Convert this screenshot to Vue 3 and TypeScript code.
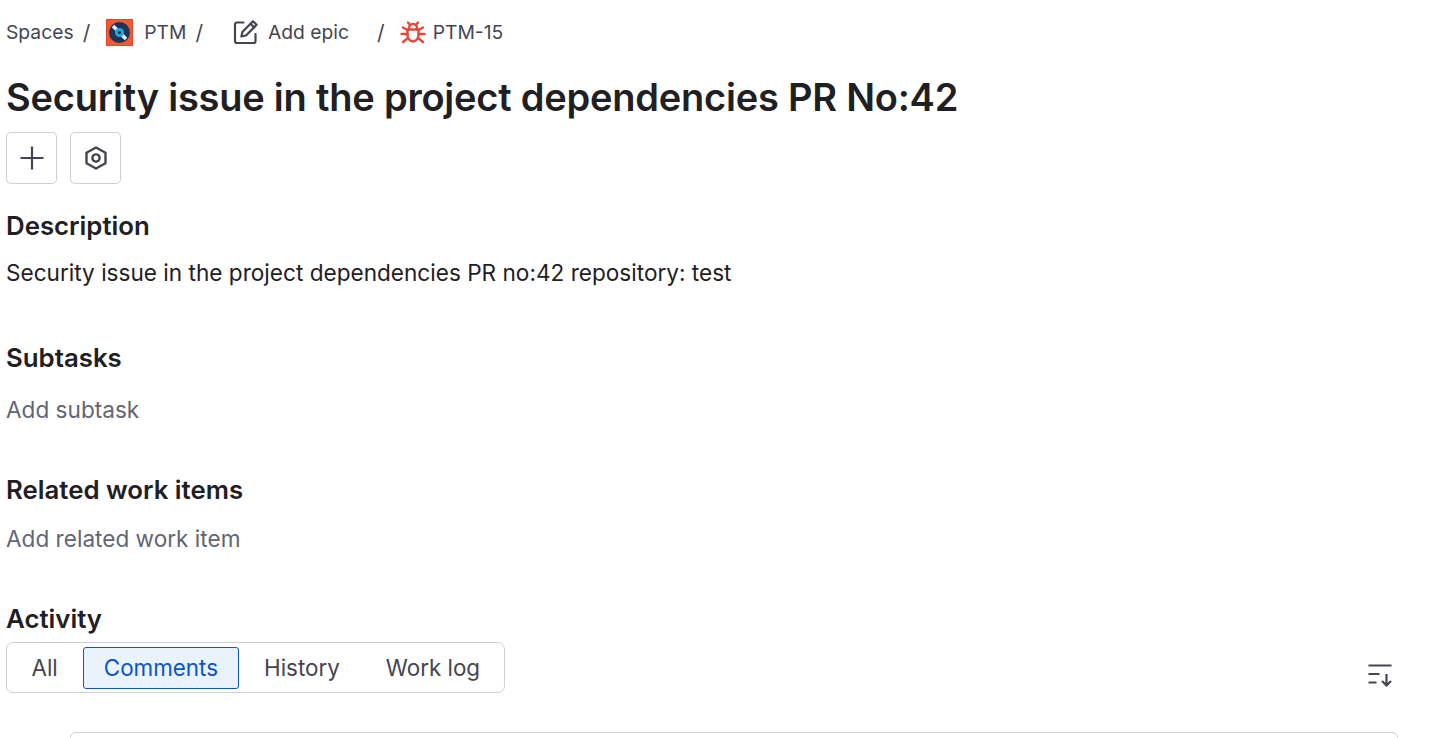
<script setup lang="ts">
type Crumb = { label: string; icon?: "project" | "edit" | "bug" };

const crumbs: Crumb[] = [
  { label: "Spaces" },
  { label: "PTM", icon: "project" },
  { label: "Add epic", icon: "edit" },
  { label: "PTM-15", icon: "bug" },
];
const tabs = ["All", "Comments", "History", "Work log"];
const activeTab = "Comments";
</script>

<template>
  <main class="page">
    <nav class="crumbs">
      <template v-for="(crumb, i) in crumbs" :key="crumb.label">
        <span v-if="i > 0" class="slash" :class="'slash-' + i">/</span>
        <span class="crumb">
          <svg v-if="crumb.icon === 'project'" class="project-icon" width="27" height="27" viewBox="0 0 27 27">
            <rect x="0.5" y="0.5" width="26" height="26" fill="#ef5a32" stroke="#e0492a" />
            <circle cx="13.5" cy="13.5" r="10.5" fill="#1e3557" />
            <path d="M7 7l13 13" stroke="#e8eef5" stroke-width="3.5" />
            <circle cx="13.5" cy="13.5" r="4.5" fill="#1fa6e0" />
            <circle cx="13.5" cy="13.5" r="1.5" fill="#123" />
          </svg>
          <svg v-else-if="crumb.icon === 'edit'" class="edit-icon" width="26" height="26" viewBox="0 0 26 26" fill="none" stroke="#44464f" stroke-width="2.2" stroke-linecap="round" stroke-linejoin="round">
            <path d="M10.5 3.5H4a2 2 0 0 0-2 2V22a2 2 0 0 0 2 2h16.5a2 2 0 0 0 2-2v-7" />
            <path d="M20 2.2l3.6 3.6L13 16.5l-4.6 1 1-4.6z" />
            <path d="M17.5 4.8l3.6 3.6" />
          </svg>
          <svg v-else-if="crumb.icon === 'bug'" class="bug-icon" width="26" height="26" viewBox="0 0 26 26" fill="none" stroke="#e5493a" stroke-width="2.4" stroke-linecap="round" stroke-linejoin="round">
            <path d="M7.5 10.500h11v5.500a5.500 6.500 0 0 1-11 0z" />
            <path d="M9 10.500V9a4 4 0 0 1 8 0v1.500" />
            <path d="M8 3.500l2.300 2.600M18 3.500l-2.300 2.600" />
            <path d="M1.500 15h6M18.500 15h6M3 8.500l4.500 2.500M23 8.500L18.500 11M3 23l5-4M23 23l-5-4" />
          </svg>
          {{ crumb.label }}
        </span>
      </template>
    </nav>

    <h1 class="title">Security issue in the project dependencies PR No:42</h1>

    <div class="actions">
      <button class="icon-btn">
        <svg width="26" height="26" viewBox="0 0 26 26" fill="none" stroke="#44464f" stroke-width="2.2">
          <path d="M13 1.500v23M1.500 13h23" />
        </svg>
      </button>
      <button class="icon-btn">
        <svg width="26" height="26" viewBox="0 0 26 26" fill="none" stroke="#44464f" stroke-width="2.4" stroke-linejoin="round">
          <path d="M13 2.500l9.500 5.300v10.400L13 23.500l-9.500-5.300V7.800z" />
          <circle cx="13" cy="13" r="3.600" />
        </svg>
      </button>
    </div>

    <section class="block block-desc">
      <h2>Description</h2>
      <p class="text">Security issue in the project dependencies PR no:42 repository: test</p>
    </section>
    <section class="block block-sub">
      <h2>Subtasks</h2>
      <p class="muted">Add subtask</p>
    </section>
    <section class="block block-rel">
      <h2>Related work items</h2>
      <p class="muted muted-tight">Add related work item</p>
    </section>
    <section class="block block-act">
      <h2>Activity</h2>
      <div class="tab-row">
        <div class="tabs">
          <button v-for="tab in tabs" :key="tab" class="tab" :class="{ active: tab === activeTab }">{{ tab }}</button>
        </div>
        <svg class="sort" width="28" height="28" viewBox="0 0 28 28" fill="none" stroke="#44464f" stroke-width="2.2">
          <path d="M1.500 4.500h23M1.500 13h11M1.500 21.500h8" />
          <path d="M19.500 13v11.500M15 20l4.500 4.500L24 20" />
        </svg>
      </div>
      <div class="comment-box"></div>
    </section>
  </main>
</template>

<style>
html,
body {
  margin: 0;
  background: #fff;
  overflow: hidden;
}
</style>

<style scoped>
.page {
  height: 738px;
  box-sizing: border-box;
  padding: 0 6px;
  overflow: hidden;
  font-family: Inter, "Liberation Sans", sans-serif;
  color: #1f2024;
}

.crumbs {
  display: flex;
  align-items: center;
  height: 64px;
  font-size: 19.3px;
  color: #44464f;
}
.crumb {
  display: flex;
  align-items: center;
  white-space: nowrap;
}
.slash {
  font-size: 21px;
  margin: 0 16px 0 9px;
}
.slash-2 {
  margin: 0 30px 0 9px;
}
.slash-3 {
  margin: 0 15px 0 28px;
}
.project-icon {
  margin-right: 11px;
}
.edit-icon {
  margin-right: 9px;
}
.bug-icon {
  margin-right: 7px;
}

.title {
  margin: 9px 0 0;
  font-size: 38px;
  line-height: 48px;
  font-weight: 600;
  letter-spacing: -0.22px;
  color: #1f2024;
  white-space: nowrap;
}

.actions {
  display: flex;
  gap: 13px;
  margin-top: 11px;
}
.icon-btn {
  width: 51px;
  height: 52px;
  padding: 0;
  display: flex;
  align-items: center;
  justify-content: center;
  background: #fff;
  border: 1.5px solid #cfd0d4;
  border-radius: 5px;
}

.block h2 {
  margin: 0;
  font-size: 25.8px;
  line-height: 32px;
  font-weight: 600;
  color: #1f2024;
}
.block-desc {
  margin-top: 26px;
}
.block-sub {
  margin-top: 54px;
}
.block-rel {
  margin-top: 49px;
}
.block-act {
  margin-top: 49px;
}
.text {
  margin: 16px 0 0;
  font-size: 22.6px;
  line-height: 30px;
  color: #1f2024;
}
.muted {
  margin: 21px 0 0;
  font-size: 22.6px;
  line-height: 30px;
  color: #626572;
}
.muted-tight {
  margin-top: 18px;
}

.tab-row {
  display: flex;
  align-items: center;
  justify-content: space-between;
  margin-top: 7px;
  padding-right: 55.5px;
}
.tabs {
  display: flex;
  align-items: center;
  gap: 4px;
  width: 499px;
  height: 51px;
  box-sizing: border-box;
  padding: 0 3.5px;
  border: 1.5px solid #cfd0d4;
  border-radius: 7px;
}
.tab {
  height: 42px;
  padding: 0 20px;
  font: 400 22.4px Inter, "Liberation Sans", sans-serif;
  white-space: nowrap;
  color: #44464f;
  background: none;
  border: 1.5px solid transparent;
  border-radius: 3px;
}
.tab.active {
  color: #0c55c4;
  background: #e9f2fd;
  border-color: #0c55c4;
}
.sort {
  margin-top: 14px;
}
.comment-box {
  height: 60px;
  margin: 39px 52px 0 64px;
  border: 1.5px solid #cfd0d4;
  border-radius: 6px;
}
</style>
